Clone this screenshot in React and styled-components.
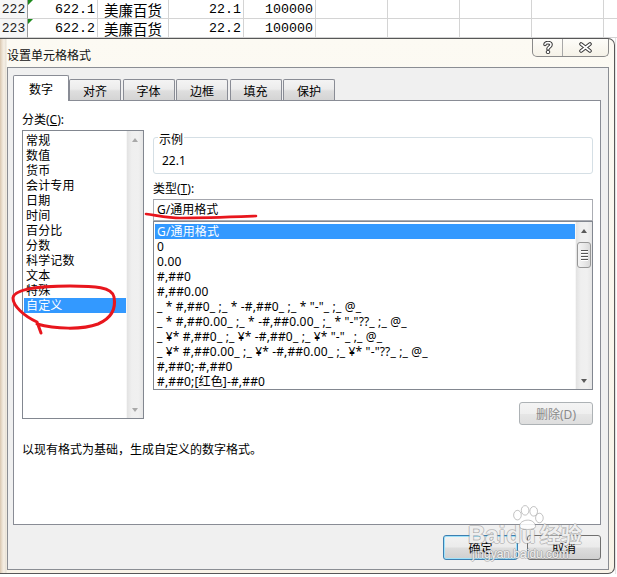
import React from "react";
import styled, { createGlobalStyle, css } from "styled-components";

const GlobalStyle = createGlobalStyle`
  html, body {
    margin: 0;
    padding: 0;
    background: #fff;
  }
  body {
    font-family: "Noto Sans", "Noto Sans CJK SC", sans-serif;
    font-size: 12px;
    color: #000;
  }
  * {
    box-sizing: border-box;
  }
`;

const Page = styled.div`
  position: relative;
  width: 617px;
  height: 577px;
  overflow: hidden;
  background: #fff;
`;

/* ---------- spreadsheet behind the dialog ---------- */

const Sheet = styled.div`
  display: flex;
  flex-direction: column;
`;

const SheetRow = styled.div`
  display: flex;
  height: 19px;
`;

const RowHead = styled.div`
  flex: none;
  width: 28px;
  border-right: 1px solid #9c9c9c;
  border-bottom: 1px solid #d4d4d4;
  background: #f6f6f6;
  font-family: "Liberation Mono", "Noto Sans CJK SC", monospace;
  font-size: 13px;
  line-height: 19px;
  text-align: center;
  color: #222;
`;

const Cell = styled.div`
  position: relative;
  flex: none;
  width: ${(p) => p.$w}px;
  border-right: 1px solid #d4d4d4;
  border-bottom: 1px solid #d4d4d4;
  font-family: "Liberation Mono", "Noto Sans CJK SC", monospace;
  font-size: 13.3px;
  line-height: 19px;
  white-space: nowrap;
  text-align: right;
  padding-right: 2px;
  ${(p) =>
    p.$text &&
    css`
      text-align: left;
      padding: 1px 0 0 6px;
      font-family: "Noto Sans CJK SC", sans-serif;
      font-size: 14.5px;
      line-height: 17px;
    `}
  ${(p) =>
    p.$flag &&
    css`
      &::before {
        content: "";
        position: absolute;
        left: 0;
        top: 0;
        border-top: 5px solid #1c8a1c;
        border-right: 5px solid transparent;
      }
    `}
`;

/* ---------- dialog frame ---------- */

const DialogArea = styled.div`
  display: flex;
`;

const Dialog = styled.div`
  flex: none;
  width: 615px;
  height: 536px;
  border: 1px solid #575757;
  border-left: none;
  border-radius: 0 7px 7px 0;
  padding: 0 5px 3px 7px;
  display: flex;
  flex-direction: column;
  background: linear-gradient(
      90deg,
      #d8c5ae 0px,
      #eadfcf 2px,
      #f6f0e6 4px,
      #e6dfd4 6px,
      rgba(255, 255, 255, 0) 7px
    ),
    linear-gradient(180deg, #fcfaf3 0%, #f8f3e7 100%);
`;

const SheetEdge = styled.div`
  flex: 1;
  background: #fdfdfd;
  border-left: 1px solid #e4e4e4;
`;

const TitleBar = styled.div`
  height: 28px;
  display: flex;
  align-items: flex-start;
  justify-content: space-between;
`;

const Title = styled.div`
  padding-top: 8px;
  line-height: 15px;
  font-family: "Noto Sans CJK SC", sans-serif;
  font-size: 12px;
  color: #111;
`;

const CaptionGroup = styled.div`
  display: flex;
  height: 18px;
  border: 1px solid #8a8a8a;
  border-top: none;
  border-radius: 0 0 5px 5px;
  background: linear-gradient(180deg, rgba(255, 255, 255, 0.5), rgba(235, 230, 215, 0.4));
  overflow: hidden;
`;

const CaptionBtn = styled.div`
  width: ${(p) => p.$w}px;
  display: flex;
  align-items: center;
  justify-content: center;
  & + & {
    border-left: 1px solid #a8a8a8;
  }
`;

const Client = styled.div`
  width: 602px;
  height: 503px;
  border: 1px solid #8a8d93;
  background: #f0f0f0;
  padding: 7px 7px 0 5px;
  display: flex;
  flex-direction: column;
`;

/* ---------- tabs ---------- */

const TabRow = styled.div`
  display: flex;
  align-items: flex-end;
  height: 25px;
`;

const Tab = styled.div`
  position: relative;
  flex: none;
  display: flex;
  align-items: center;
  justify-content: center;
  border: 1px solid #898c95;
  border-bottom: none;
  font-family: "Noto Sans CJK SC", sans-serif;
  font-size: 12px;
  ${(p) =>
    p.$active
      ? css`
          z-index: 2;
          width: 56px;
          height: 26px;
          margin-bottom: -1px;
          background: #fff;
          border-radius: 2px 2px 0 0;
        `
      : css`
          width: 52px;
          height: 21px;
          margin-left: ${p.$first ? 0 : 1.5}px;
          padding-top: 1px;
          border-radius: 2px 2px 0 0;
          background: linear-gradient(180deg, #f4f4f4 0%, #ececec 45%, #dedede 55%, #d4d4d4 100%);
        `}
`;

const Panel = styled.div`
  position: relative;
  z-index: 1;
  width: 588px;
  height: 425px;
  border: 1px solid #898c95;
  background: #fff;
`;

const PanelBody = styled.div`
  display: grid;
  grid-template-columns: 122px 440px;
  column-gap: 9px;
  padding-left: 8px;
  align-items: start;
`;

const Column = styled.div`
  display: flex;
  flex-direction: column;
  padding-top: ${(p) => p.$top}px;
`;

const Label = styled.div`
  line-height: 15px;
  margin-top: ${(p) => p.$gap || 0}px;
  font-family: "Noto Sans", "Noto Sans CJK SC", sans-serif;
  white-space: pre;
`;

/* ---------- list boxes ---------- */

const ListBox = styled.div`
  display: flex;
  height: ${(p) => p.$h}px;
  margin-top: ${(p) => p.$gap || 0}px;
  border: 1px solid #828790;
  background: #fff;
`;

const ListItems = styled.div`
  flex: 1;
  min-width: 0;
  padding: 2px 0 0 1px;
  overflow: hidden;
`;

const ListItem = styled.div`
  height: 15px;
  line-height: 15px;
  padding-left: 2px;
  white-space: pre;
  letter-spacing: 0.15px;
  font-family: "Noto Sans", "Noto Sans CJK SC", sans-serif;
  font-size: 12px;
  ${(p) =>
    p.$selected &&
    css`
      background: #3399ff;
      color: #fff;
    `}
`;

const ScrollBar = styled.div`
  flex: none;
  width: 17px;
  display: flex;
  flex-direction: column;
  background: linear-gradient(90deg, #e2e2e2 0%, #efefef 30%, #f0f0f0 70%, #e6e6e6 100%);
  border-left: 1px solid #f7f7f7;
`;

const ArrowBox = styled.div`
  flex: none;
  height: 17px;
  display: flex;
  align-items: center;
  justify-content: center;
  &::after {
    content: "";
    border-left: 3.5px solid transparent;
    border-right: 3.5px solid transparent;
    ${(p) =>
      p.$down
        ? css`
            border-top: 4px solid ${p.$muted ? "#a9a9a9" : "#5a5a5a"};
          `
        : css`
            border-bottom: 4px solid ${p.$muted ? "#a9a9a9" : "#5a5a5a"};
          `}
  }
`;

const Track = styled.div`
  flex: 1;
  padding: 3px 1px 0;
`;

const Thumb = styled.div`
  height: 26px;
  border: 1px solid #979797;
  border-radius: 3px;
  background: linear-gradient(90deg, #f4f4f4 0%, #e9e9e9 50%, #dadada 100%);
  display: flex;
  flex-direction: column;
  align-items: center;
  justify-content: center;
  gap: 2px;
`;

const Grip = styled.div`
  width: 7px;
  height: 1px;
  background: #555;
  box-shadow: 0 1px 0 #fff;
`;

/* ---------- right column parts ---------- */

const Group = styled.div`
  height: 37px;
  border: 1px solid #d5dfe5;
  border-radius: 3px;
  padding: 0 8px 0 4px;
`;

const GroupLabel = styled.div`
  width: fit-content;
  margin-top: -7px;
  padding: 0 1px;
  background: #fff;
  line-height: 15px;
  font-family: "Noto Sans CJK SC", sans-serif;
`;

const GroupValue = styled.div`
  margin-top: 7px;
  padding-left: 4px;
  line-height: 15px;
`;

const TextBox = styled.div`
  height: 22px;
  margin-top: 3px;
  border: 1px solid #abadb3;
  border-top-color: #a4a6ad;
  padding-left: 3px;
  line-height: 20px;
  background: #fff;
`;

const Button = styled.div`
  flex: none;
  width: ${(p) => p.$w}px;
  height: ${(p) => p.$h || 25}px;
  display: flex;
  align-items: center;
  justify-content: center;
  border: 1px solid #707070;
  border-radius: 3px;
  font-family: "Noto Sans", "Noto Sans CJK SC", sans-serif;
  font-size: 12px;
  background: linear-gradient(180deg, #f2f2f2 0%, #ebebeb 48%, #dddddd 52%, #cfcfcf 100%);
  ${(p) =>
    p.$disabled &&
    css`
      color: #8a8a8a;
      border-color: #adb2b5;
      background: linear-gradient(180deg, #f4f4f4 0%, #efefef 50%, #e6e6e6 52%, #dedede 100%);
    `}
  ${(p) =>
    p.$focused &&
    css`
      border-color: #3c7fb1;
      box-shadow: inset 0 0 0 1px #9ee2fb;
    `}
`;

const DeleteRow = styled.div`
  display: flex;
  justify-content: flex-end;
  margin-top: 12px;
`;

const Description = styled.div`
  margin-top: 16px;
  padding-left: 8px;
  line-height: 15px;
  font-family: "Noto Sans CJK SC", sans-serif;
`;

const Footer = styled.div`
  display: flex;
  justify-content: flex-end;
  gap: 9px;
  margin-top: 10px;
`;

/* ---------- overlays ---------- */

const Annotation = styled.svg`
  position: absolute;
  left: 0;
  top: 0;
  pointer-events: none;
  z-index: 5;
`;

const Watermark = styled.div`
  position: absolute;
  left: 468px;
  top: 505px;
  z-index: 4;
  display: flex;
  flex-direction: column;
  align-items: flex-start;
  color: rgba(255, 255, 255, 0.85);
  text-shadow: 1px 0 rgba(140, 140, 140, 0.45), -1px 0 rgba(140, 140, 140, 0.45),
    0 1px rgba(140, 140, 140, 0.45), 0 -1px rgba(140, 140, 140, 0.45);
  pointer-events: none;
`;

const WatermarkMain = styled.div`
  display: flex;
  align-items: flex-end;
  font-family: "Liberation Sans", "Noto Sans CJK SC", sans-serif;
  font-size: 24px;
  font-weight: bold;
  line-height: 26px;
  margin-top: -9px;
`;

const WatermarkSub = styled.div`
  font-family: "Liberation Sans", sans-serif;
  font-size: 12px;
  line-height: 13px;
  padding-left: 4px;
`;

const columns = [70, 71, 75, 72, 72, 72, 72, 72, 40];

const sheetRows = [
  { n: "222", cells: ["622.1", "美廉百货", "22.1", "100000"] },
  { n: "223", cells: ["622.2", "美廉百货", "22.2", "100000"] },
];

const tabs = ["数字", "对齐", "字体", "边框", "填充", "保护"];

const categories = [
  "常规",
  "数值",
  "货币",
  "会计专用",
  "日期",
  "时间",
  "百分比",
  "分数",
  "科学记数",
  "文本",
  "特殊",
  "自定义",
];

const formats = [
  "G/通用格式",
  "0",
  "0.00",
  "#,##0",
  "#,##0.00",
  '_ * #,##0_ ;_ * -#,##0_ ;_ * "-"_ ;_ @_',
  '_ * #,##0.00_ ;_ * -#,##0.00_ ;_ * "-"??_ ;_ @_',
  '_ ¥* #,##0_ ;_ ¥* -#,##0_ ;_ ¥* "-"_ ;_ @_',
  '_ ¥* #,##0.00_ ;_ ¥* -#,##0.00_ ;_ ¥* "-"??_ ;_ @_',
  "#,##0;-#,##0",
  "#,##0;[红色]-#,##0",
];

function HelpGlyph() {
  return (
    <svg width="10" height="13" viewBox="0 0 10 13">
      <g fill="none" strokeLinecap="round" strokeLinejoin="round">
        <path d="M2 3.5 C2 1 8 1 8 3.8 C8 6 5 6 5 8" stroke="#3a3a3a" strokeWidth="3.6" />
        <path d="M2 3.5 C2 1 8 1 8 3.8 C8 6 5 6 5 8" stroke="#fff" strokeWidth="1.6" />
      </g>
      <circle cx="5" cy="11" r="1.8" fill="#fff" stroke="#3a3a3a" strokeWidth="1" />
    </svg>
  );
}

function CloseGlyph() {
  return (
    <svg width="13" height="11" viewBox="0 0 13 11">
      <g strokeLinecap="round">
        <path d="M2 2 L11 9 M11 2 L2 9" stroke="#3a3a3a" strokeWidth="3.6" />
        <path d="M2 2 L11 9 M11 2 L2 9" stroke="#fff" strokeWidth="1.6" />
      </g>
    </svg>
  );
}

function Scroll({ muted, thumb }) {
  return (
    <ScrollBar>
      <ArrowBox $muted={muted} />
      <Track>
        {thumb && (
          <Thumb>
            <Grip />
            <Grip />
            <Grip />
            <Grip />
          </Thumb>
        )}
      </Track>
      <ArrowBox $down $muted={muted} />
    </ScrollBar>
  );
}

export default function App() {
  return (
    <Page>
      <GlobalStyle />
      <Sheet>
        {sheetRows.map((row) => (
          <SheetRow key={row.n}>
            <RowHead>{row.n}</RowHead>
            {columns.map((w, i) => (
              <Cell key={i} $w={w} $text={i === 1} $flag={i === 0}>
                {row.cells[i] || ""}
              </Cell>
            ))}
          </SheetRow>
        ))}
      </Sheet>

      <DialogArea>
        <Dialog>
          <TitleBar>
            <Title>设置单元格格式</Title>
            <CaptionGroup>
              <CaptionBtn $w={29}>
                <HelpGlyph />
              </CaptionBtn>
              <CaptionBtn $w={46}>
                <CloseGlyph />
              </CaptionBtn>
            </CaptionGroup>
          </TitleBar>

          <Client>
            <TabRow>
              {tabs.map((t, i) => (
                <Tab key={t} $active={i === 0} $first={i === 1}>
                  {t}
                </Tab>
              ))}
            </TabRow>

            <Panel>
              <PanelBody>
                <Column $top={11}>
                  <Label>
                    分类(<u>C</u>):
                  </Label>
                  <ListBox $h={289} $gap={3}>
                    <ListItems>
                      {categories.map((c) => (
                        <ListItem key={c} $selected={c === "自定义"}>
                          {c}
                        </ListItem>
                      ))}
                    </ListItems>
                    <Scroll muted />
                  </ListBox>
                </Column>

                <Column $top={36}>
                  <Group>
                    <GroupLabel>示例</GroupLabel>
                    <GroupValue>22.1</GroupValue>
                  </Group>
                  <Label $gap={7}>
                    类型(<u>T</u>):
                  </Label>
                  <TextBox>G/通用格式</TextBox>
                  <ListBox $h={169}>
                    <ListItems>
                      {formats.map((f, i) => (
                        <ListItem key={f} $selected={i === 0}>
                          {f}
                        </ListItem>
                      ))}
                    </ListItems>
                    <Scroll thumb />
                  </ListBox>
                  <DeleteRow>
                    <Button $w={74} $h={23} $disabled>
                      删除(D)
                    </Button>
                  </DeleteRow>
                </Column>
              </PanelBody>
              <Description>以现有格式为基础，生成自定义的数字格式。</Description>
            </Panel>

            <Footer>
              <Button $w={75} $focused>
                确定
              </Button>
              <Button $w={74}>取消</Button>
            </Footer>
          </Client>
        </Dialog>
        <SheetEdge />
      </DialogArea>

      <Watermark>
        <svg width="42" height="26" viewBox="0 0 44 26" style={{ marginLeft: 38 }}>
          <g fill="rgba(255,255,255,0.85)" stroke="rgba(130,130,130,0.5)" strokeWidth="1">
            <ellipse cx="12" cy="10" rx="4" ry="5" />
            <ellipse cx="20" cy="5" rx="4" ry="5" />
            <ellipse cx="29" cy="6" rx="4" ry="5" />
            <ellipse cx="35" cy="13" rx="4" ry="5" />
            <path d="M14 22 C14 14 30 12 31 22 C31 26 14 26 14 22 Z" />
          </g>
        </svg>
        <WatermarkMain>
          Bai<span style={{ margin: "0 1px" }}>du</span>
          <span style={{ fontSize: 21, marginLeft: 3 }}>经验</span>
        </WatermarkMain>
        <WatermarkSub>jingyan.baidu.com</WatermarkSub>
      </Watermark>

      <Annotation width="617" height="577" viewBox="0 0 617 577">
        <path
          d="M41 333 L37 322 C24 316 13 306 13 298 C14 289 40 286 70 286 C95 286 112 287 114 297 C116 308 112 318 98 324 C82 330 55 329 37 324"
          fill="none"
          stroke="#e8161d"
          strokeWidth="3"
          strokeLinecap="round"
          strokeLinejoin="round"
        />
        <path
          d="M146 214 C160 216 170 218 180 218 C205 218 230 217 256 216"
          fill="none"
          stroke="#e8161d"
          strokeWidth="2.6"
          strokeLinecap="round"
        />
      </Annotation>
    </Page>
  );
}
